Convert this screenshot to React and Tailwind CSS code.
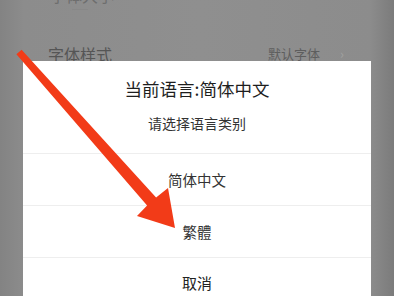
import React from "react";

export default function App() {
  const font = { fontFamily: '"Noto Sans CJK SC", "Noto Sans", sans-serif' };
  return (
    <div
      className="relative w-[394px] h-[296px] overflow-hidden bg-[linear-gradient(90deg,#838383_0px,#8c8c8c_24px,#8f8f8f_200px,#8c8c8c_370px,#7b7b7b_394px)]"
      style={font}
    >
      {/* background settings list */}
      <div className="flex flex-col">
        <div className="h-[14px] relative">
          <div className="pl-[50px] -mt-[13px] text-[16px] leading-[16px] text-[#6e6e6e]">字体大小</div>
          <div className="ml-[72px] mt-[6px] w-[16px] h-[1px] bg-[#888888]" />
        </div>
        <div className="flex items-center h-[52px] mt-[14px] pl-[48px] pr-[50px]">
          <span className="text-[16px] text-[#555555]">字体样式</span>
          <span className="ml-auto text-[13px] text-[#5e5e5e]">默认字体</span>
          <span className="ml-[20px] text-[13px] text-[#a0a0a0]">›</span>
        </div>
      </div>

      {/* dialog */}
      <div className="absolute left-[23px] top-[61px] w-[348px] h-[260px] bg-white flex flex-col">
        <div className="flex flex-col items-center pt-[16px] pb-[20px]">
          <div className="text-[17.5px] leading-[24px] text-[#1e1e1e]">当前语言:简体中文</div>
          <div className="mt-[12px] text-[14px] leading-[20px] text-[#333333]">请选择语言类别</div>
        </div>
        <div className="h-[52px] border-t border-[#eeeeee] flex items-center justify-center text-[14.5px] text-[#333333]">
          简体中文
        </div>
        <div className="h-[52px] border-t border-[#eeeeee] flex items-center justify-center text-[14.5px] text-[#333333]">
          繁體
        </div>
        <div className="h-[52px] border-t border-[#eeeeee] flex items-center justify-center text-[15px] text-[#222222]">
          取消
        </div>
      </div>

      {/* red annotation arrow */}
      <svg className="absolute inset-0" width="394" height="296" viewBox="0 0 394 296">
        <polygon
          points="21.6,49.7 156.1,197.6 168,188 175,228 137,216 147.1,205.6 16.4,54.3"
          fill="#f23b18"
        />
      </svg>
    </div>
  );
}
